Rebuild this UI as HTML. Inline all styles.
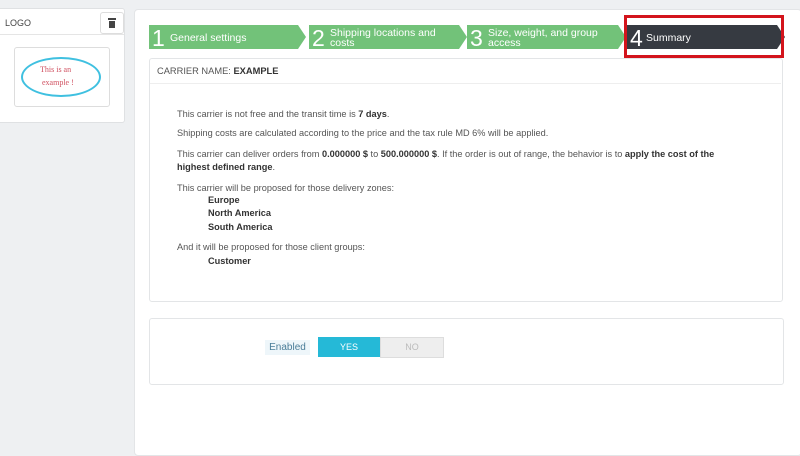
<!DOCTYPE html>
<html><head><style>
body{margin:0;width:800px;height:450px;background:#eef0f2;font-family:"Liberation Sans",sans-serif;position:relative;overflow:hidden;color:#555}
.abs{position:absolute}
.lp{left:0;top:8px;width:124px;height:113px;background:#fff;border:1px solid #dfe1e3;border-left:none;border-radius:0 3px 3px 0}
.main{left:134px;top:9px;width:666px;height:445px;background:#fff;border:1px solid #e3e5e7;border-radius:4px}
.step{top:25px;height:24px;color:#fff;font-size:10.5px;line-height:10px}
.step .n{position:absolute;left:3px;top:1px;font-size:23px;line-height:24px}
.step .t{position:absolute;left:21px;top:3px}
.p{font-size:9.2px;color:#555;position:absolute;left:177px;white-space:nowrap}
b{color:#333}
</style></head><body>
<div class="abs lp">
 <div class="abs" style="left:5px;top:9px;font-size:9px;color:#444">LOGO</div>
 <div class="abs" style="left:100px;top:3px;width:22px;height:20px;border:1px solid #ddd;border-radius:3px;background:#fff">
  <div class="abs" style="left:7px;top:5px;width:8px;height:2px;background:#444"></div>
  <div class="abs" style="left:8px;top:8px;width:6px;height:7px;background:#444"></div>
 </div>
 <div class="abs" style="left:0;top:25px;width:124px;border-top:1px solid #e5e5e5"></div>
 <div class="abs" style="left:14px;top:38px;width:94px;height:58px;border:1px solid #ddd;border-radius:3px">
  <div class="abs" style="left:6px;top:9px;width:76px;height:36px;border:2px solid #3fc0e0;border-radius:50%"></div>
  <div class="abs" style="left:25px;top:17px;font-size:8px;color:#d05060;font-family:'Liberation Serif',serif">This is an</div>
  <div class="abs" style="left:27px;top:30px;font-size:8px;color:#d05060;font-family:'Liberation Serif',serif">example !</div>
 </div>
</div>
<div class="abs main"></div>
<svg class="abs" style="left:149px;top:25px" width="640" height="25">
 <polygon points="0,0 149,0 157,12 149,24 0,24" fill="#72c279"/>
 <polygon points="160,0 310,0 318,12 310,24 160,24" fill="#72c279"/>
 <polygon points="318,0 469,0 477,12 469,24 318,24" fill="#72c279"/>
 <polygon points="478,0 628,0 636,12 628,24 478,24" fill="#363a41"/>
</svg>
<div class="abs" style="left:624px;top:15px;width:154px;height:37px;border:3px solid #d3141c"></div>
<div class="abs step" style="left:149px;width:150px"><span class="n">1</span><span class="t" style="top:8px">General settings</span></div>
<div class="abs step" style="left:309px;width:150px"><span class="n">2</span><span class="t">Shipping locations and<br>costs</span></div>
<div class="abs step" style="left:467px;width:150px"><span class="n">3</span><span class="t">Size, weight, and group<br>access</span></div>
<div class="abs step" style="left:627px;width:150px"><span class="n">4</span><span class="t" style="left:19px;top:8px">Summary</span></div>
<div class="abs" style="left:149px;top:58px;width:632px;height:242px;border:1px solid #e3e5e7;border-radius:3px"></div>
<div class="abs" style="left:150px;top:83px;width:631px;border-top:1px solid #eee"></div>
<div class="abs" style="left:157px;top:66px;font-size:9.3px;color:#555">CARRIER NAME: <b>EXAMPLE</b></div>
<div class="p" style="top:109px">This carrier is not free and the transit time is <b>7 days</b>.</div>
<div class="p" style="top:128px">Shipping costs are calculated according to the price and the tax rule MD 6% will be applied.</div>
<div class="p" style="top:149px">This carrier can deliver orders from <b>0.000000 $</b> to <b>500.000000 $</b>. If the order is out of range, the behavior is to <b>apply the cost of the</b></div>
<div class="p" style="top:162px"><b>highest defined range</b>.</div>
<div class="p" style="top:183px">This carrier will be proposed for those delivery zones:</div>
<div class="p" style="top:195px;left:208px"><b>Europe</b></div>
<div class="p" style="top:208px;left:208px"><b>North America</b></div>
<div class="p" style="top:222px;left:208px"><b>South America</b></div>
<div class="p" style="top:242px">And it will be proposed for those client groups:</div>
<div class="p" style="top:256px;left:208px"><b>Customer</b></div>
<div class="abs" style="left:149px;top:318px;width:633px;height:65px;border:1px solid #e3e5e7;border-radius:3px"></div>
<div class="abs" style="left:265px;top:340px;width:45px;height:15px;background:#eef6fa;font-size:10px;color:#4a7d98;line-height:15px;text-align:center">Enabled</div>
<div class="abs" style="left:318px;top:337px;width:62px;height:20px;background:#25b9d7;color:#fff;font-size:9px;line-height:20px;text-align:center">YES</div>
<div class="abs" style="left:380px;top:337px;width:62px;height:19px;background:#eee;border:1px solid #ddd;color:#bbb;font-size:9px;line-height:19px;text-align:center">NO</div>
</body></html>
